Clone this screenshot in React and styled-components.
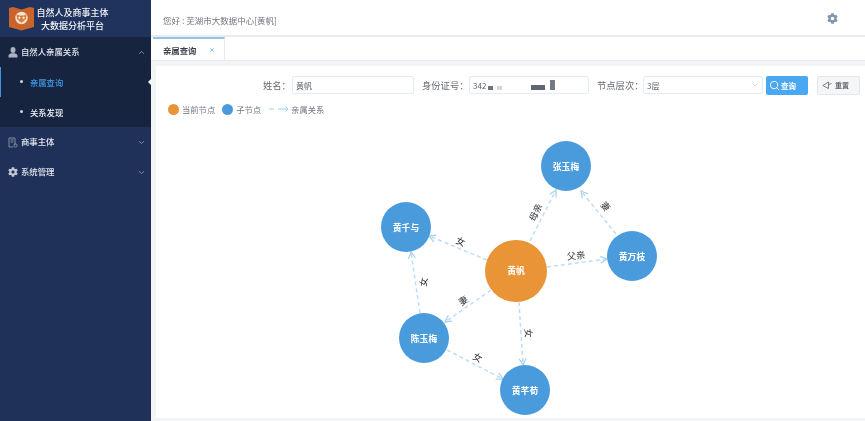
import React from "react";
import styled, { createGlobalStyle } from "styled-components";
import { ChevronDown, ChevronUp, Search, X } from "lucide-react";
import { FaCog } from "react-icons/fa";

const Global = createGlobalStyle`
  html, body { margin: 0; padding: 0; height: 100%; background: #fff; overflow: hidden; }
  #root { height: 100%; }
  * { box-sizing: border-box; }
`;

const Shell = styled.div`
  display: grid;
  grid-template-columns: 151px 1fr;
  width: 865px;
  height: 421px;
  font-family: "Noto Sans CJK SC", "Liberation Sans", sans-serif;
  filter: blur(0.45px);
`;

const Sidebar = styled.aside`
  background: #1f3159;
  display: flex;
  flex-direction: column;
  color: #e4e8ef;
`;

const Brand = styled.div`
  height: 37px;
  display: flex;
  align-items: center;
  gap: 2px;
  padding-left: 9px;
  background: #20335c;
`;

const BrandTitle = styled.div`
  width: 73px;
  text-align: center;
  font-size: 9px;
  line-height: 13px;
  font-weight: 500;
  color: #f0f2f6;
  white-space: nowrap;
`;

const SubGroup = styled.div`
  background: #16243f;
`;

const MenuRow = styled.div`
  height: 30px;
  display: flex;
  align-items: center;
  gap: 3px;
  padding: 0 5px 0 8px;
  font-size: 8.4px;
  font-weight: 500;
  color: #e3e6ec;
  white-space: nowrap;
  svg.chev { margin-left: auto; color: #9aa4b6; }
`;

const MenuLabel = styled.span`
  flex: 1;
  padding-bottom: 2px;
`;

const SubRow = styled.div`
  position: relative;
  height: 30px;
  display: flex;
  align-items: center;
  padding: 0 0 1px 20px;
  gap: 7px;
  font-size: 8.3px;
  font-weight: 500;
  color: ${(p) => (p.$active ? "#3f9ae6" : "#eef1f5")};
  box-shadow: ${(p) => (p.$active ? "inset 1px 0 0 #3f97dd" : "none")};
`;

const Bullet = styled.i`
  width: 3px;
  height: 3px;
  border-radius: 50%;
  background: #cfd6e0;
`;

const Notch = styled.i`
  position: absolute;
  right: 0;
  top: 12px;
  width: 0;
  height: 0;
  border-top: 3px solid transparent;
  border-bottom: 3px solid transparent;
  border-right: 3px solid #fff;
`;

const Main = styled.main`
  display: flex;
  flex-direction: column;
  min-width: 0;
  background: #f2f4f6;
`;

const Header = styled.header`
  height: 37px;
  flex: none;
  background: #fff;
  border-bottom: 2px solid #e9ebee;
  display: flex;
  align-items: center;
  justify-content: space-between;
  padding: 5px 27px 0 12px;
  font-size: 8.5px;
  color: #70767f;
  svg { color: #7f96ae; margin-bottom: 4px; }
`;

const Tabs = styled.nav`
  height: 24px;
  flex: none;
  background: #fff;
  border-bottom: 1px solid #e8ebef;
  padding-left: 2px;
  display: flex;
`;

const Tab = styled.div`
  width: 72px;
  border-top: 2px solid #8ec5ee;
  border-right: 1px solid #e8ebef;
  display: flex;
  align-items: center;
  justify-content: space-between;
  padding: 0 9px 0 10px;
  font-size: 8.4px;
  font-weight: 700;
  color: #3a3f47;
  svg { color: #5dade6; }
`;

const Card = styled.section`
  flex: 1;
  margin: 5px 0 3px 5px;
  background: #fff;
  display: flex;
  flex-direction: column;
  min-height: 0;
  border-radius: 2px 0 0 2px;
`;

const FormRow = styled.div`
  display: flex;
  align-items: center;
  height: 18px;
  margin-top: 10px;
  padding-left: 107px;
  font-size: 9.3px;
  color: #666c75;
`;

const FieldLabel = styled.label`
  width: ${(p) => p.$w}px;
  white-space: nowrap;
`;

const Field = styled.div`
  width: ${(p) => p.$w}px;
  height: 18px;
  margin-right: ${(p) => p.$mr}px;
  border: 1px solid #e3ebf4;
  border-radius: 2px;
  background: #fff;
  display: flex;
  align-items: center;
  padding-left: 3px;
  font-size: 8px;
  color: #5c626b;
  svg { margin-left: auto; margin-right: 3px; color: #b9bfc8; }
`;

const Mask = styled.i`
  width: ${(p) => p.$w}px;
  height: ${(p) => p.$h}px;
  margin-left: ${(p) => p.$ml}px;
  background: ${(p) => p.$c};
  align-self: flex-end;
  margin-bottom: 3px;
`;

const Primary = styled.button`
  width: 42px;
  height: 19px;
  margin-left: 3px;
  border: 0;
  border-radius: 2px;
  background: #4aa8f2;
  color: #fff;
  display: flex;
  align-items: center;
  gap: 1px;
  padding: 0 0 0 3px;
  font: 700 7.5px "Noto Sans CJK SC", sans-serif;
`;

const Ghost = styled.button`
  width: 43px;
  height: 19px;
  margin-left: 9px;
  border: 1px solid #e4e6e9;
  border-radius: 2px;
  background: #f5f6f7;
  color: #5f6670;
  display: flex;
  align-items: center;
  gap: 3px;
  padding: 0 0 0 4px;
  font: 700 7px "Noto Sans CJK SC", sans-serif;
`;

const Legend = styled.div`
  display: flex;
  align-items: center;
  height: 14px;
  margin-top: 8px;
  padding-left: 12px;
  font-size: 8.3px;
  color: #70767f;
`;

const Dot = styled.i`
  width: 11px;
  height: 11px;
  border-radius: 50%;
  background: ${(p) => p.$c};
  margin-right: 3px;
`;

const LegendText = styled.span`
  margin-right: ${(p) => p.$mr}px;
  white-space: nowrap;
`;

const GraphSvg = styled.svg`
  flex: 1;
  min-height: 0;
  width: 100%;
  display: block;
  text { font-family: "Noto Sans CJK SC", sans-serif; }
`;

const nodes = [
  { n: "张玉梅", x: 566, y: 166 },
  { n: "黄千与", x: 406, y: 227 },
  { n: "黄万枝", x: 632, y: 256 },
  { n: "陈玉梅", x: 424, y: 338 },
  { n: "黄芊荀", x: 525, y: 390 },
];

const links = [
  { a: [530, 241], b: [556, 190], t: "母亲", lx: 535, ly: 212, r: -66 },
  { a: [616, 234], b: [581, 191], t: "妻", lx: 606, ly: 206, r: 50 },
  { a: [487, 260], b: [429, 236], t: "女", lx: 461, ly: 241, r: 22 },
  { a: [547, 267], b: [607, 259], t: "父亲", lx: 576, ly: 255, r: -6 },
  { a: [420, 313], b: [411, 252], t: "女", lx: 423, ly: 282, r: -82 },
  { a: [491, 290], b: [445, 322], t: "妻", lx: 463, ly: 300, r: -35 },
  { a: [519, 302], b: [523, 365], t: "女", lx: 529, ly: 333, r: 86 },
  { a: [447, 350], b: [503, 379], t: "女", lx: 478, ly: 357, r: 27 },
];

function Book() {
  return (
    <svg width="25" height="25" viewBox="0 0 25 25" aria-hidden="true">
      <path d="M0 2 L4 1 L12.5 3.5 L21 1 L25 2 V21 L12.5 24.5 L0 21 Z" fill="#c9652b" />
      <circle cx="12.5" cy="12" r="6.2" fill="#f3e3d3" />
      <path d="M7.5 8 L10 9.5 H15 L17.5 8 L17 13 L12.5 17 L8 13 Z" fill="#d9803f" />
      <circle cx="10.4" cy="11.8" r="1" fill="#fff" />
      <circle cx="14.6" cy="11.8" r="1" fill="#fff" />
    </svg>
  );
}

function Person() {
  return (
    <svg width="10" height="11" viewBox="0 0 10 11" fill="#aab2bf" aria-hidden="true">
      <ellipse cx="5" cy="3" rx="2.5" ry="3" />
      <path d="M0.5 10.5 V8.8 C0.5 7.3 2.5 6.6 3.6 6.3 H6.4 C7.5 6.6 9.5 7.3 9.5 8.8 V10.5 Z" />
    </svg>
  );
}

function Company() {
  return (
    <svg width="10" height="11" viewBox="0 0 10 11" fill="none" stroke="#8d97a9" strokeWidth="0.9" aria-hidden="true">
      <path d="M7 8V1H1v9h4" />
      <path d="M2.5 3h3M2.5 5h3" />
      <circle cx="7.5" cy="8.5" r="1.6" />
    </svg>
  );
}

function Broom() {
  return (
    <svg width="10" height="11" viewBox="0 0 10 11" fill="none" stroke="#6c737d" strokeWidth="0.9" aria-hidden="true">
      <path d="M0.8 5.5 L6.5 2 V8.6 Z" />
      <path d="M6.5 4.5 L9.5 3.5" />
    </svg>
  );
}

export default function App() {
  return (
    <Shell>
      <Global />
      <Sidebar>
        <Brand>
          <Book />
          <BrandTitle>
            自然人及商事主体
            <br />
            大数据分析平台
          </BrandTitle>
        </Brand>
        <SubGroup>
          <MenuRow>
            <Person />
            <MenuLabel>自然人亲属关系</MenuLabel>
            <ChevronUp className="chev" size={9} />
          </MenuRow>
          <SubRow $active>
            <Bullet />
            亲属查询
            <Notch />
          </SubRow>
          <SubRow>
            <Bullet />
            关系发现
          </SubRow>
        </SubGroup>
        <MenuRow>
          <Company />
          <MenuLabel>商事主体</MenuLabel>
          <ChevronDown className="chev" size={9} />
        </MenuRow>
        <MenuRow>
          <FaCog size={10} color="#c3c9d4" />
          <MenuLabel>系统管理</MenuLabel>
          <ChevronDown className="chev" size={9} />
        </MenuRow>
      </Sidebar>
      <Main>
        <Header>
          <span>您好 : 芜湖市大数据中心[黄帆]</span>
          <FaCog size={11} />
        </Header>
        <Tabs>
          <Tab>
            亲属查询
            <X size={6} strokeWidth={3} />
          </Tab>
        </Tabs>
        <Card>
          <FormRow>
            <FieldLabel $w={29}>姓名：</FieldLabel>
            <Field $w={122} $mr={8}>黄帆</Field>
            <FieldLabel $w={47}>身份证号：</FieldLabel>
            <Field $w={120} $mr={8}>
              342
              <Mask $w={5} $h={4} $ml={2} $c="#6d7480" />
              <Mask $w={5} $h={4} $ml={4} $c="#d5d8dc" />
              <Mask $w={14} $h={5} $ml={29} $c="#5f6672" />
              <Mask $w={5} $h={10} $ml={5} $c="#747a84" />
            </Field>
            <FieldLabel $w={46}>节点层次：</FieldLabel>
            <Field $w={120} $mr={0}>
              3层
              <ChevronDown size={8} />
            </Field>
            <Primary>
              <Search size={11} />
              查询
            </Primary>
            <Ghost>
              <Broom />
              重置
            </Ghost>
          </FormRow>
          <Legend>
            <Dot $c="#e99436" />
            <LegendText $mr={7}>当前节点</LegendText>
            <Dot $c="#4a9bdc" />
            <LegendText $mr={8}>子节点</LegendText>
            <svg width="20" height="8" viewBox="0 0 20 8" fill="none" stroke="#9fd0f0" strokeWidth="1" aria-hidden="true" style={{ marginRight: 2 }}>
              <path d="M0 4h5M9 4h10M16.5 1.5L19 4l-2.5 2.5" />
            </svg>
            <LegendText $mr={0}>亲属关系</LegendText>
          </Legend>
          <GraphSvg viewBox="156 116 709 302" preserveAspectRatio="xMinYMin meet">
            <defs>
              <marker id="arrow" markerWidth="9" markerHeight="9" refX="7" refY="4" orient="auto" markerUnits="userSpaceOnUse">
                <path d="M0.5 0.5 L7 4 L0.5 7.5" fill="none" stroke="#a8d3f2" strokeWidth="1.3" />
              </marker>
            </defs>
            {links.map((l) => (
              <g key={l.t + l.lx}>
                <line
                  x1={l.a[0]}
                  y1={l.a[1]}
                  x2={l.b[0]}
                  y2={l.b[1]}
                  stroke="#bcdef6"
                  strokeWidth="1.5"
                  strokeDasharray="4 3"
                  markerEnd="url(#arrow)"
                />
                <text
                  x={l.lx}
                  y={l.ly}
                  fontSize="9.2"
                  fill="#2f3338"
                  textAnchor="middle"
                  dominantBaseline="central"
                  transform={`rotate(${l.r} ${l.lx} ${l.ly})`}
                >
                  {l.t}
                </text>
              </g>
            ))}
            <circle cx="516" cy="271" r="31" fill="#e99436" />
            <text x="516" y="270" fontSize="8.8" fontWeight="700" fill="#fff" textAnchor="middle" dominantBaseline="central">黄帆</text>
            {nodes.map((n) => (
              <g key={n.n}>
                <circle cx={n.x} cy={n.y} r="25" fill="#4a9bdc" />
                <text x={n.x} y={n.y} fontSize="8.8" fontWeight="700" fill="#fff" textAnchor="middle" dominantBaseline="central">{n.n}</text>
              </g>
            ))}
          </GraphSvg>
        </Card>
      </Main>
    </Shell>
  );
}
